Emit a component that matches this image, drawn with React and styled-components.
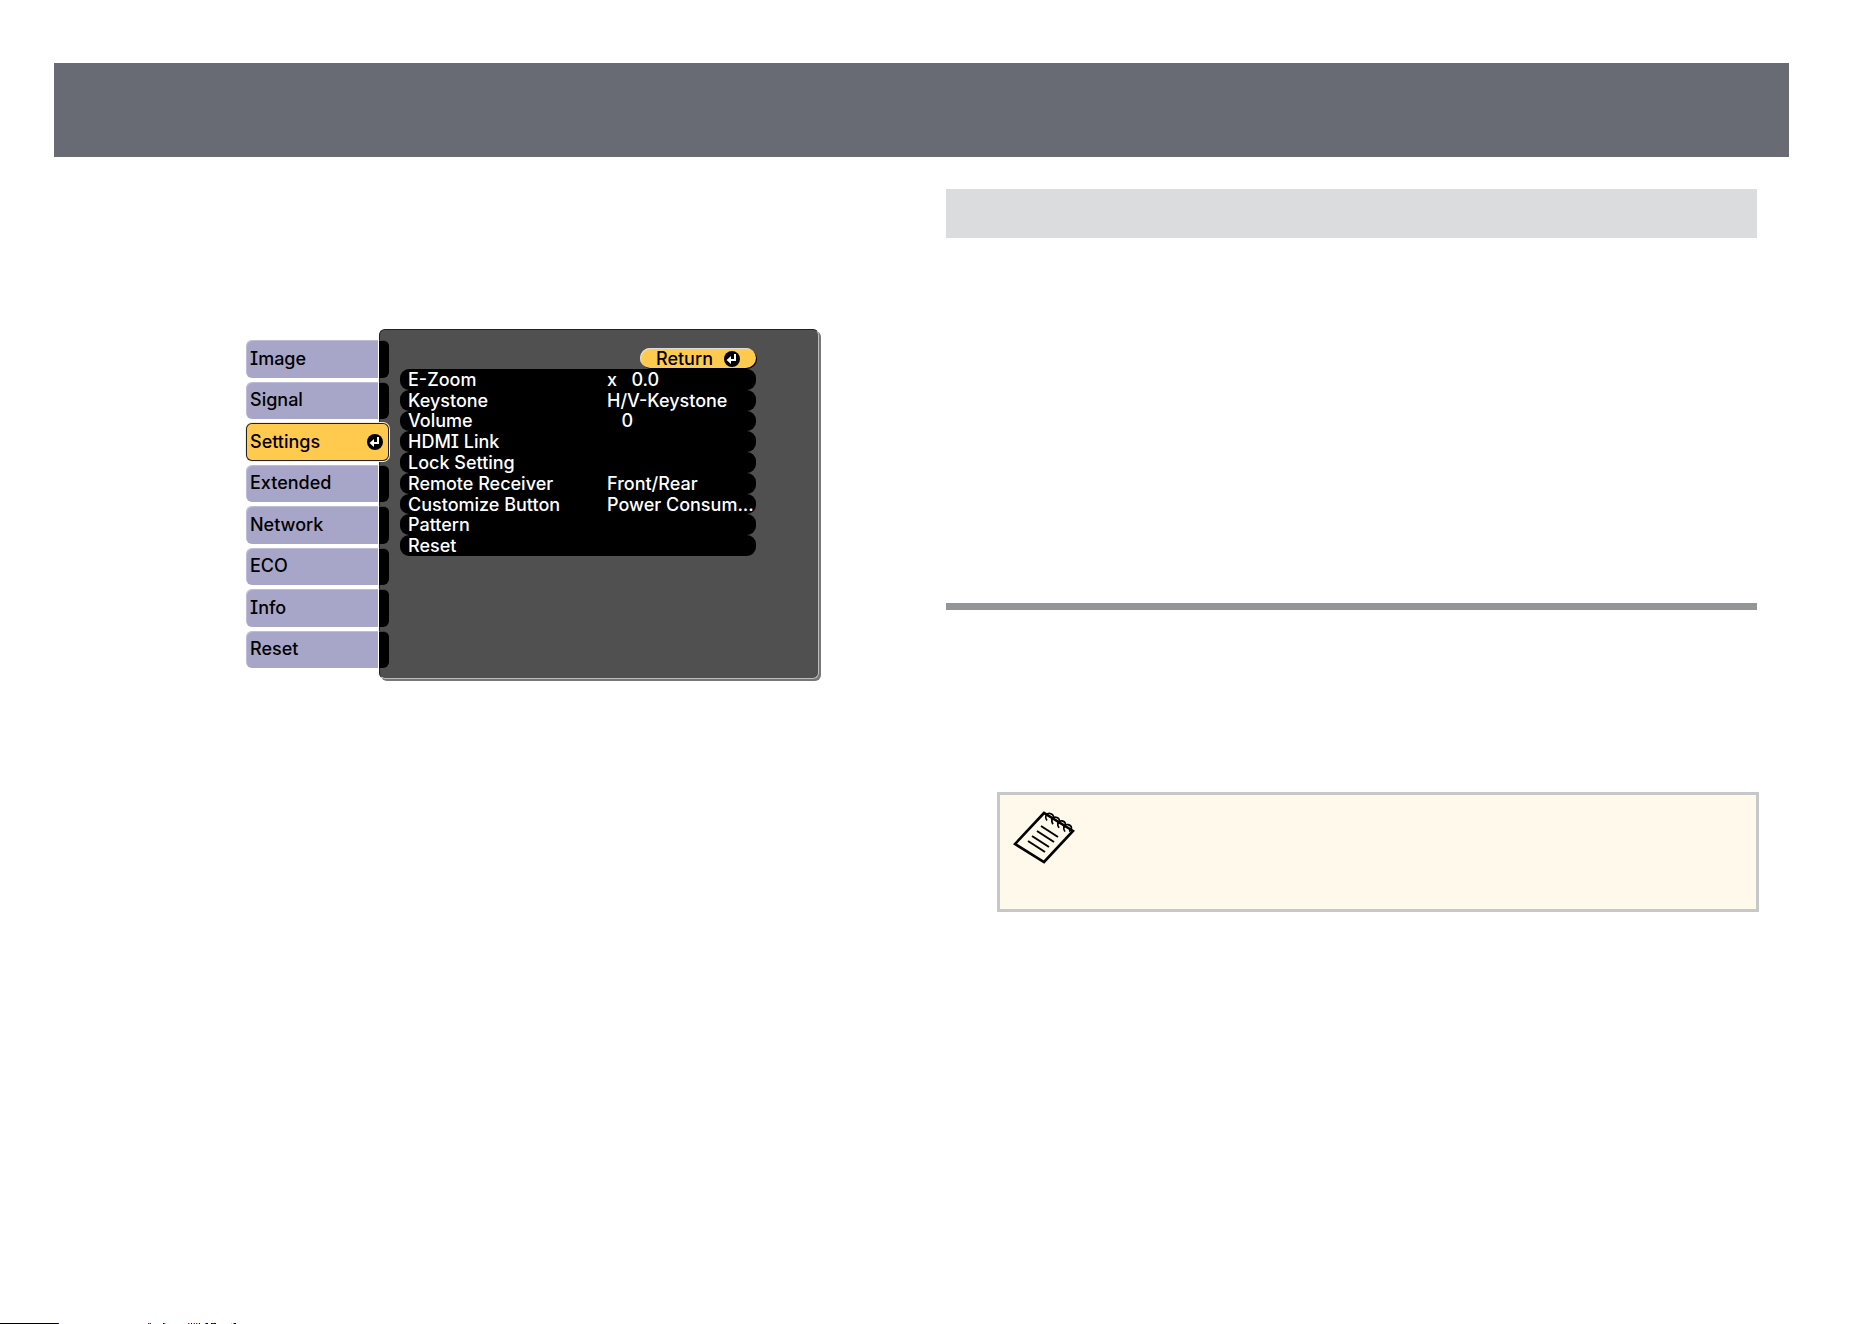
import React, { useState } from "react";
import styled, { createGlobalStyle, css } from "styled-components";

const GlobalStyle = createGlobalStyle`
  *, *::before, *::after { box-sizing: border-box; }
  body { margin: 0; background: #fff; font-family: Inter, "Liberation Sans", sans-serif; }
`;

const Page = styled.div`
  position: relative;
  min-height: 100vh;
  padding-top: 63px;
`;

const Banner = styled.header`
  height: 94px;
  margin: 0 83px 0 54px;
  background: #696b74;
`;

const Columns = styled.main`
  display: grid;
  grid-template-columns: 700fr 811fr;
  padding: 32px 115px 0 246px;
`;

const Menu = styled.section`
  display: flex;
  align-items: stretch;
  align-self: start;
  height: 350px;
  margin-top: 140px;
  font-size: 18px;
  line-height: 18px;
  font-weight: 500;
  font-feature-settings: "cv08" 1;
`;

const Tabs = styled.nav`
  display: grid;
  grid-auto-rows: 1fr;
  gap: 4px;
  width: 143px;
  margin-right: -10px;
  padding: 11px 0;
  z-index: 1;
`;

const menuButton = css`
  font: inherit;
  font-feature-settings: inherit;
  color: #000;
  cursor: pointer;
`;

const Tab = styled.button`
  ${menuButton}
  display: flex;
  align-items: center;
  justify-content: space-between;
  padding: 0 6px 0 4px;
  border: 0;
  border-radius: 6px;
  text-align: left;
  background: linear-gradient(to right, #a8a6c8 132px, #fff 132px 133px, #000 133px);
  box-shadow: inset 1px 1px 0 rgba(255, 255, 255, 0.25);
  ${({ $active }) =>
    $active &&
    css`
      background: #ffca4e;
      box-shadow: inset 0 0 0 1px #222, 0 0 0 1px #eee;
    `}
`;

const Panel = styled.div`
  width: 440px;
  padding: 18px 62px 0 20px;
  border: 1px solid #222;
  border-right-color: #bbb;
  border-bottom-color: #bbb;
  border-radius: 6px;
  background: #505050;
  box-shadow: 2px 2px 0 #777;
`;

const ReturnButton = styled.button`
  ${menuButton}
  display: flex;
  align-items: center;
  justify-content: space-between;
  width: 116px;
  height: 20px;
  margin-left: auto;
  padding: 1px 16px 0;
  border: 0;
  border-radius: 10px;
  background: #ffca4e;
  box-shadow: inset 1px 1px 0 #ddd, 1px 1px 0 #000;
`;

const Settings = styled.dl`
  display: grid;
  grid-auto-rows: 1fr;
  height: 187px;
  margin: 1px 0 0;
`;

const Setting = styled.div`
  display: grid;
  grid-template-columns: 199px 1fr;
  align-items: center;
  padding: 1px 0 0 8px;
  border-radius: 9px;
  background: #000;
  color: #fff;
`;

const Name = styled.dt``;

const Value = styled.dd`
  margin: 0;
  white-space: pre;
`;

const Article = styled.section`
  display: flex;
  flex-direction: column;
`;

const Heading = styled.div`
  height: 49px;
  background: #dbdcde;
`;

const Rule = styled.hr`
  width: 100%;
  height: 7px;
  margin: 365px 0 182px;
  border: 0;
  background: #949596;
`;

const Note = styled.aside`
  height: 120px;
  margin: 0 -2px 0 51px;
  padding: 16px 13px;
  border: 3px solid #c6c7c9;
  background: #fff9eb;
`;

const PageEdge = styled.svg`
  position: absolute;
  left: 0;
  bottom: 0;
  display: block;
`;

function EnterIcon() {
  return (
    <svg width="16" height="16" viewBox="0 0 16 16" aria-hidden="true">
      <circle cx="8" cy="8" r="8" fill="#000" />
      <path d="M11 3V9H6" fill="none" stroke="#fff" strokeWidth="2" />
      <path d="M2.5 9l4.5-4v8z" fill="#fff" />
    </svg>
  );
}

function NotepadIcon() {
  return (
    <svg width="62" height="54" viewBox="0 0 62 54" fill="none" stroke="#000" aria-hidden="true">
      <path d="M31 2L2 33l29 18 29-31z" strokeWidth="2.6" />
      <path d="M28 15l17 11M24 20l17 11M19 25l17 11M15 30l17 11" strokeWidth="2" />
      {[0, 1, 2, 3].map((i) => (
        <path
          key={i}
          transform={`translate(${i * 6} ${i * 3.7})`}
          d="M34 9.5C31 5 34 2 37 2.500c5 1 4 6 1 6.500"
          strokeWidth="1.6"
        />
      ))}
    </svg>
  );
}

const edgeMarks = [
  [0, 58, "#000"], [58, 1, "#30c"],
  [148, 1, "#c03"], [149, 1, "#6c3"], [150, 1, "#03c"],
  [163, 1, "#300"], [164, 1, "#d33"], [165, 1, "#6ee"],
  [188, 1, "#d03"], [189, 1, "#7cc"], [191, 1, "#000"],
  [193, 1, "#dc6"], [194, 1, "#33c"], [196, 1, "#c03"],
  [197, 1, "#9d6"], [198, 1, "#ee6"], [199, 1, "#300"],
  [205, 1, "#964"], [206, 2, "#000"],
  [211, 1, "#000"], [212, 2, "#911"], [214, 2, "#011"],
  [231, 1, "#dc6"], [233, 1, "#c84"], [234, 2, "#000"],
];

const tabs = ["Image", "Signal", "Settings", "Extended", "Network", "ECO", "Info", "Reset"];

const settings = [
  ["E-Zoom", "x   0.0"],
  ["Keystone", "H/V-Keystone"],
  ["Volume", "   0"],
  ["HDMI Link", ""],
  ["Lock Setting", ""],
  ["Remote Receiver", "Front/Rear"],
  ["Customize Button", "Power Consum..."],
  ["Pattern", ""],
  ["Reset", ""],
];

export default function App() {
  const [active, setActive] = useState("Settings");
  return (
    <>
      <GlobalStyle />
      <Page>
        <Banner />
        <Columns>
          <Menu>
            <Tabs>
              {tabs.map((tab) => (
                <Tab key={tab} $active={tab === active} onClick={() => setActive(tab)}>
                  {tab}
                  {tab === active && <EnterIcon />}
                </Tab>
              ))}
            </Tabs>
            <Panel>
              <ReturnButton>
                Return
                <EnterIcon />
              </ReturnButton>
              <Settings>
                {settings.map(([name, value]) => (
                  <Setting key={name}>
                    <Name>{name}</Name>
                    <Value>{value}</Value>
                  </Setting>
                ))}
              </Settings>
            </Panel>
          </Menu>
          <Article>
            <Heading />
            <Rule />
            <Note>
              <NotepadIcon />
            </Note>
          </Article>
        </Columns>
        <PageEdge width="240" height="1" aria-hidden="true">
          {edgeMarks.map(([x, width, fill]) => (
            <rect key={x} x={x} width={width} height="1" fill={fill} />
          ))}
        </PageEdge>
      </Page>
    </>
  );
}
